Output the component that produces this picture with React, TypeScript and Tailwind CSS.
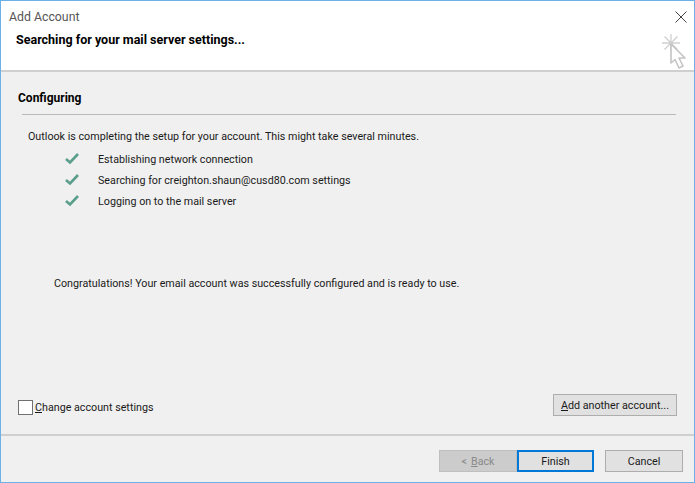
export default function App() {
  const font = { fontFamily: 'Roboto, "Noto Sans", sans-serif' };
  const Check = () => (
    <svg width="14" height="12" viewBox="0 0 14 12" className="shrink-0">
      <path d="M1 6 L5 9.5 L13 1" fill="none" stroke="#5a9e8c" strokeWidth="2.6" />
    </svg>
  );
  const Row = ({ text }: { text: string }) => (
    <div className="flex items-center h-[21px]">
      <div className="w-[70px] pl-[37px] pb-[4px] flex"><Check /></div>
      <span>{text}</span>
    </div>
  );
  return (
    <div style={font} className="w-[695px] h-[483px] border border-[#6cb0e8] bg-[#f0f0f0] flex flex-col text-[10.73px] text-[#1a1a1a] overflow-hidden">
      <div className="h-[71px] bg-white border-b-2 border-[#cfcfcf] flex flex-col shrink-0 relative">
        <div className="h-[32px] pl-2 flex items-center text-[12.3px] text-[#555]">Add Account</div>
        <div className="pl-[15px] text-[12.5px] font-bold text-black leading-[16px] mt-[-1px]">Searching for your mail server settings...</div>
        <svg className="absolute right-[7px] top-[10px]" width="12" height="12" viewBox="0 0 12 12">
          <path d="M0.5 0.5 L11.5 11.5 M11.5 0.5 L0.5 11.5" stroke="#444" strokeWidth="1" />
        </svg>
        <svg className="absolute right-[6px] top-[32px]" width="28" height="37" viewBox="0 0 28 37">
          <path d="M11 1 V18 M2 10 H20 M4.5 3.5 L17.5 16.5 M17.5 3.5 L4.5 16.5" stroke="#cfcfcf" strokeWidth="1.3" fill="none" />
          <path d="M11 11 V30 L15 26.5 L19 35 L23 33 L19 25 L25 25 Z" fill="#fff" stroke="#c4c4c4" strokeWidth="1.6" strokeLinejoin="round" />
        </svg>
      </div>
      <div className="flex-1 flex flex-col px-[17px] min-h-0">
        <div className="mt-[17px] h-[18px] leading-[18px] font-bold text-black text-[12px]">Configuring</div>
        <div className="mt-[7px] ml-[4px] mr-[1px] border-t border-[#b9b9b9]" />
        <div className="mt-[13px] ml-[10px] h-[18px] leading-[18px]">Outlook is completing the setup for your account. This might take several minutes.</div>
        <div className="mt-[4px] ml-[10px] flex flex-col">
          <Row text="Establishing network connection" />
          <Row text="Searching for creighton.shaun@cusd80.com settings" />
          <Row text="Logging on to the mail server" />
        </div>
        <div className="mt-[62px] ml-[36px] h-[18px] leading-[18px]">Congratulations! Your email account was successfully configured and is ready to use.</div>
        <div className="mt-auto mb-[18px] flex items-end justify-between">
          <div className="flex items-end mb-[1px]">
            <div className="w-[15px] h-[15px] border border-[#707070] bg-white" />
            <span className="ml-[2px] leading-[15px]"><u>C</u>hange account settings</span>
          </div>
          <div className="w-[124px] h-[22px] pt-[2px] bg-[#e1e1e1] border border-[#adadad] flex items-center justify-center"><span><u>A</u>dd another account...</span></div>
        </div>
      </div>
      <div className="h-[48px] shrink-0 border-t-2 border-[#cfcfcf] flex items-start justify-end pt-[14px] pr-[11px]">
        <div className="w-[78px] h-[22px] pt-[2px] bg-[#cccccc] border border-[#bfbfbf] text-[#8a8a8a] flex items-center justify-center">&lt; <u className="ml-1">B</u>ack</div>
        <div className="w-[77px] h-[22px] pt-[2px] bg-[#e1e1e1] border-2 border-[#0078d7] flex items-center justify-center">Finish</div>
        <div className="w-[78px] h-[22px] pt-[2px] ml-[11px] bg-[#e1e1e1] border border-[#adadad] flex items-center justify-center">Cancel</div>
      </div>
    </div>
  );
}
